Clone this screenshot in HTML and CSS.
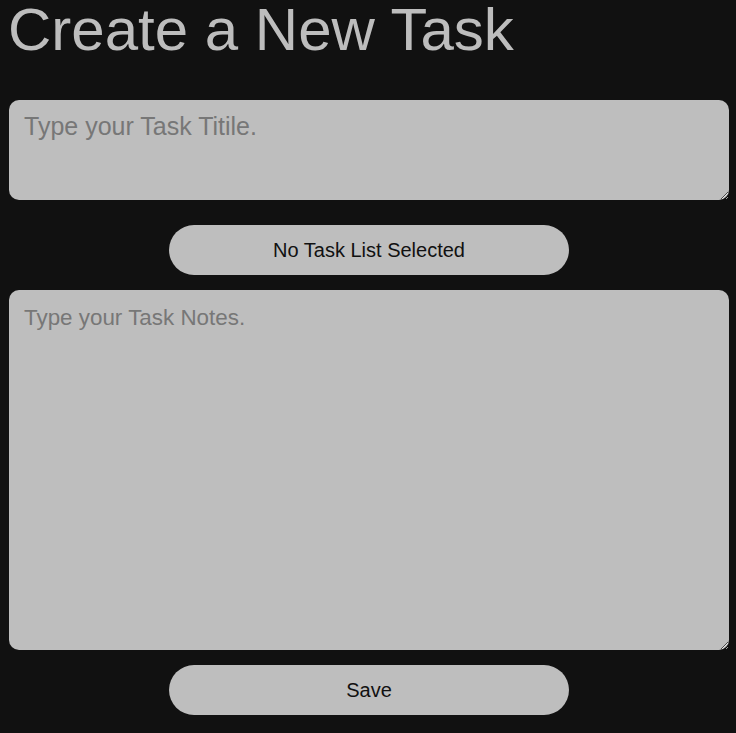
FILE: index.html
```html
<!DOCTYPE html>
<html lang="en">
<head>
<meta charset="utf-8">
<title>Create a New Task</title>
<link rel="stylesheet" href="styles.css">
</head>
<body>
<main class="page">
  <h1 class="title">Create a New Task</h1>
  <form class="task-form">
    <textarea class="field field-title" placeholder="Type your Task Titile."></textarea>
    <button type="button" class="pill pill-list">No Task List Selected</button>
    <textarea class="field field-notes" placeholder="Type your Task Notes."></textarea>
    <button type="button" class="pill pill-save">Save</button>
  </form>
</main>
</body>
</html>
```

FILE: styles.css
```css
html, body {
  margin: 0;
  padding: 0;
  background: #111111;
}

body {
  font-family: "Liberation Sans", Arial, sans-serif;
}

.page {
  padding: 0 8px 18px 8px;
}

.title {
  margin: 0;
  font-size: 60px;
  line-height: 60px;
  font-weight: normal;
  color: #bdbdbd;
}

.task-form {
  width: 720px;
  margin-left: 1px;
  padding-top: 40px;
}

.field {
  display: block;
  box-sizing: border-box;
  width: 720px;
  margin: 0;
  border: none;
  border-radius: 10px;
  background: #bebebe;
  color: #111111;
  font-family: "Liberation Sans", Arial, sans-serif;
  outline: none;
}

.field::placeholder {
  color: #777777;
  opacity: 1;
}

.field-title {
  height: 100px;
  padding: 12px 15px;
  font-size: 25px;
}

.field-notes {
  height: 360px;
  padding: 15px 15px;
  font-size: 22.4px;
}

.pill {
  display: block;
  width: 400px;
  height: 50px;
  margin: 0 auto;
  padding: 0;
  border: none;
  border-radius: 25px;
  background: #bebebe;
  color: #111111;
  font-family: "Liberation Sans", Arial, sans-serif;
  font-size: 20px;
}

.pill-list {
  margin-top: 25px;
  margin-bottom: 15px;
}

.pill-save {
  margin-top: 15px;
}
```
